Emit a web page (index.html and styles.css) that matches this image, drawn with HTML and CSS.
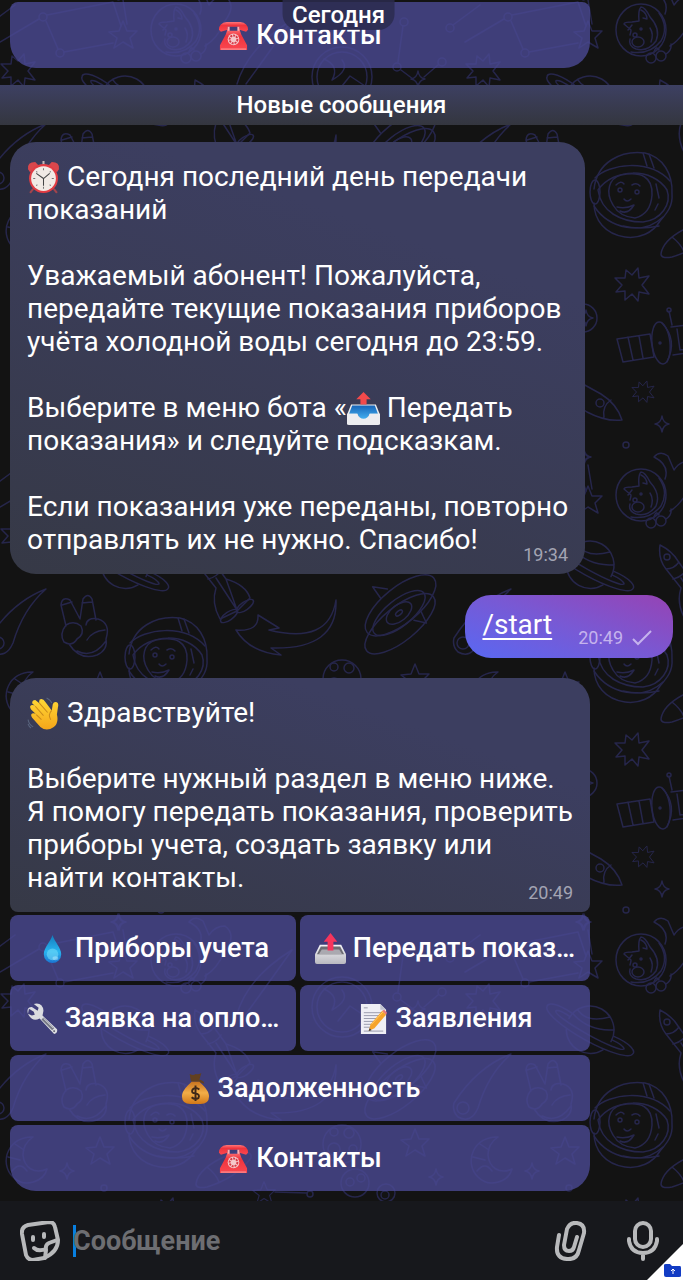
FILE: index.html
```
<!DOCTYPE html>
<html lang="ru">
<head>
    <meta charset="UTF-8">
    <meta name="viewport" content="width=device-width, initial-scale=1.0">
    <title>Чат с ботом</title>
    <link rel="stylesheet" href="styles.css">
</head>
<body>
    <!-- Обои чата: один узор, повторённый по сетке -->
    <svg class="wallpaper" aria-hidden="true">
        <defs>
            <g id="star5"><path d="M0-14L4-4 14-4 7 3 10 13 0 7-9 13-6 3-14-3-4-4z"/></g>
            <g id="star8"><path d="M0-10L6-17 7-7 17-9 10 0 17 9 7 7 6 16 0 9-7 15-7 6-16 7-10 0-17-7-7-7-6-15z"/></g>
            <g id="spark"><path d="M0-8Q1-1 7 0 1 1 0 8-1 1-7 0-1-1 0-8z"/></g>
            <g id="tile">
                <!-- космонавт -->
                <g transform="translate(629 196)">
                    <path d="M-35-7C-32-34-8-46 16-43 34-39 44-22 43-2 44 10 38 17 31 25 24 37 10 43-4 41-24 38-35 24-35 7"/>
                    <path d="M-34-18C-20-32 20-38 41-15M-31-6C-16-28 24-29 38-6 43 8 32 24 14 26-8 26-28 16-31-6z"/>
                    <path d="M-16 9C-24-4-20-18-8-21 12-25 24-19 23-1 22 14 14 20 6 22-6 21-12 16-16 9z"/>
                    <path d="M14-43L18-30M20-42L25-28M-35 10C-20 33 14 40 34 21M30 30Q10 34-6 30"/>
                    <ellipse cx="-34" cy="-4" rx="5" ry="12"/>
                    <path d="M-13-11Q-8-16-5-12M3-11Q8-14 11-10M-5 3Q-2 7 2 3M-12 11Q-3 13 5 9-1 19-9 15M27-12L30 2M29 8L26 14"/>
                    <circle cx="-9" cy="-6" r="2"/><circle cx="8" cy="-4" r="2"/>
                </g>
                <use href="#star8" x="632" y="285"/>
                <!-- спутник -->
                <path d="M617 339L650 334 654 357 623 362zM628 337L633 360M639 336L643 358M669 311L672 325M671 327L702 323 707 350 673 355M677 329L680 350 698 347 695 326M706 331L738 326 742 348 708 354M718 329L722 351"/>
                <ellipse cx="661" cy="343" rx="9" ry="21" transform="rotate(-6 661 343)"/>
                <path d="M662 323Q678 340 667 362"/><circle cx="669" cy="310" r="2"/><circle cx="660" cy="343" r="1"/>
                <use href="#star8" transform="translate(643 392) scale(.65)"/>
                <use href="#spark" x="662" y="424"/>
                <circle cx="626" cy="445" r="3"/>
                <!-- ракета слева -->
                <path d="M622 420Q617 404 601 394L572 378 560 394 587 412Q606 422 622 420zM611 400Q602 406 604 417"/>
                <circle cx="600" cy="403" r="4"/>
                <circle cx="583" cy="318" r="14"/><use href="#spark" x="586" y="318"/>
                <use href="#spark" x="584" y="457"/>
                <use href="#star5" x="588" y="500"/><path d="M588 465L592 489"/>
                <!-- собака -->
                <ellipse cx="641" cy="495" rx="25" ry="26"/>
                <path d="M659 478Q669 492 661 506 650 520 631 517"/>
                <path d="M630 500Q631 497 631 495L624 489Q624 487 632 487L639 486Q638 475 641 472 645 472 650 482 661 494 656 506 648 517 636 514 628 511 630 504M628 495L632 490M641 475Q647 478 647 484L643 483M650 493Q654 499 651 507"/>
                <ellipse cx="638" cy="507" rx="6" ry="5"/><circle cx="635" cy="500" r="2"/><circle cx="641" cy="494" r="1"/>
                <circle cx="651" cy="523" r="5"/><circle cx="661" cy="521" r="5"/>
                <path d="M654 517Q656 510 659 515M665 479Q670 465 654 457 660 450 668 456L674 470Q680 461 690 461 702 470 690 486 682 504 670 511M671 509Q672 515 666 519"/>
                <!-- планета с кольцом -->
                <g transform="translate(590 565) rotate(29)">
                    <path d="M-24 0A24 24 0 0 1 24 0M-21 11A24 24 0 0 0 21 11M-21-12Q-6-4 11-21M-23-6Q0 2 21-12"/>
                    <path d="M-24-6C-44-8-50-3-49 0A49 11 0 0 0 49 0C50-3 44-8 24-6M-24-2C-36-3-40-1-39 0A39 5 0 0 0 39 0Q36-3 24-2"/>
                </g>
                <!-- большая ракета -->
                <path d="M660 545Q658 559 666 569L681 588Q676 603 685 619L702 611M660 545Q672 551 678 561L691 579Q711 585 715 598L702 611M666 569Q674 569 679 562M673 579Q682 577 686 570M681 578L702 610M691 579L702 610"/>
                <ellipse cx="694" cy="616" rx="10" ry="4" transform="rotate(-35 694 616)"/><ellipse cx="710" cy="606" rx="10" ry="4" transform="rotate(-35 710 606)"/>
                <circle cx="667" cy="557" r="3"/>
                <!-- хвост пламени -->
                <path d="M701 630Q724 632 723 615L744 628 734 630Q794 645 801 600 803 650 736 648L746 655Q714 652 701 630z"/>
                <!-- галактика -->
                <g transform="translate(399 613) rotate(-39)">
                    <ellipse cx="6" cy="-5" rx="43" ry="18"/><ellipse cx="-6" cy="9" rx="43" ry="17"/>
                    <ellipse rx="32" ry="13"/><ellipse rx="15" ry="8"/><ellipse rx="4" ry="2"/>
                    <path d="M-5-23L-4-37 6-26M7 15L15 25 18 13"/>
                </g>
                <!-- комета -->
                <path d="M454 638Q477 602 511 589 488 609 478 643 471 659 458 652 452 646 454 638z"/><circle cx="463" cy="643" r="6"/>
                <!-- рука -->
                <path d="M66 626L61 605Q62 596 70 600L80 619 83 599Q88 592 92 599L96 620M62 605L72 602M82 603L92 602M66 625Q74 620 81 626 85 634 77 639 72 647 64 642 59 634 66 625M86 625Q87 617 98 619 111 623 106 639 108 650 97 655 80 661 69 644M87 640Q92 631 105 630M77 651Q93 659 106 641"/>
                <use href="#star8" x="483" y="71"/>
                <!-- луна и звёзды -->
                <path d="M33 672C9 671-2 697 13 712 25 724 44 716 47 704 34 710 24 702 23 690 23 682 27 676 33 672zM15 679L24 685M8 692L20 695M12 706Q20 696 27 706"/>
                <use href="#star5" x="100" y="686"/><use href="#star5" x="415" y="678"/><use href="#spark" x="436" y="712"/><use href="#spark" x="67" y="706"/>
                <circle cx="342" cy="679" r="19"/><circle cx="349" cy="668" r="5"/><circle cx="334" cy="667" r="4"/><circle cx="334" cy="684" r="6"/><circle cx="353" cy="684" r="4"/>
                <circle cx="355" cy="718" r="14"/><circle cx="350" cy="717" r="4"/><circle cx="361" cy="713" r="4"/>
                <circle cx="386" cy="728" r="9"/><circle cx="385" cy="730" r="4"/><circle cx="310" cy="729" r="3"/><circle cx="104" cy="723" r="3"/>
                <path d="M661 254Q663 238 693 225 718 218 716 228 701 248 672 257 661 259 661 254zM672 237Q681 244 684 252"/>
                <use href="#star5" transform="translate(264 728) scale(.8)"/><path d="M275 727L307 728"/>
                <!-- созвездия -->
                <circle cx="43" cy="17" r="4"/><circle cx="60" cy="53" r="4"/><circle cx="404" cy="22" r="4"/><circle cx="397" cy="67" r="4"/><circle cx="442" cy="62" r="4"/><circle cx="450" cy="28" r="4"/>
                <path d="M46 21L58 49M64 52L113 43M47 15L113 2 121 26M403 26L398 62M453 25L480 5M401 70L413 79M438 65L424 77M0 42L39 19"/>
                <use href="#spark" x="418" y="79"/><use href="#spark" x="118" y="-8"/>
                <circle cx="342" cy="77" r="30"/><circle cx="342" cy="77" r="25"/><path d="M324 59Q340 66 332 80 350 70 342 60M338 91L350 76 365 86"/>
                <path d="M237 84Q248 47 292 20M246 84Q265 58 292 20"/>
            </g>
        </defs>
        <g class="pattern">
            <use href="#tile" x="-465" y="-465"/><use href="#tile" y="-465"/><use href="#tile" x="465" y="-465"/>
            <use href="#tile" x="-465"/><use href="#tile"/><use href="#tile" x="465"/>
            <use href="#tile" x="-465" y="465"/><use href="#tile" y="465"/><use href="#tile" x="465" y="465"/>
            <use href="#tile" x="-465" y="930"/><use href="#tile" y="930"/><use href="#tile" x="465" y="930"/>
        </g>
    </svg>

    <!-- Эмодзи -->
    <svg class="sprites" aria-hidden="true">
        <defs>
            <linearGradient id="redGrad" x2="0" y2="1"><stop stop-color="#ff777a"/><stop offset=".35" stop-color="#f0343d"/><stop offset="1" stop-color="#fa4750"/></linearGradient>
            <linearGradient id="blueGrad" x2="0" y2="1"><stop stop-color="#1664b8"/><stop offset="1" stop-color="#48b4f3"/></linearGradient>
            <linearGradient id="greyGrad" x2="0" y2="1"><stop stop-color="#f5f5f7"/><stop offset="1" stop-color="#b9b9c0"/></linearGradient>
            <linearGradient id="dropGrad" x2="0" y2="1"><stop stop-color="#137bbc"/><stop offset=".6" stop-color="#29b5f0"/><stop offset="1" stop-color="#1b74d1"/></linearGradient>
            <linearGradient id="goldGrad" x2="0" y2="1"><stop stop-color="#c87420"/><stop offset=".5" stop-color="#f3ad48"/><stop offset="1" stop-color="#d27817"/></linearGradient>
            <linearGradient id="handGrad" x2="0" y2="1"><stop stop-color="#ffd735"/><stop offset="1" stop-color="#f5a61a"/></linearGradient>
        </defs>
        <symbol id="e-clock" viewBox="0 0 32 32">
            <path d="M6 27L3 31M26 27L29 31" stroke="#a3444c" stroke-width="2"/>
            <path d="M1 8Q0 1 8 1L11 4 3 11zM31 8Q32 1 24 1L21 4 29 11z" fill="#d9474c"/>
            <path d="M15 0H17V4H15z" fill="#c5b7b6"/>
            <circle cx="16" cy="17" r="14" fill="#e23c43"/><circle cx="16" cy="17" r="12" fill="#f1eae5"/>
            <path d="M16 7V9M16 25V27M6 17H8M24 17H26M9 10L10 11M23 10L22 11M9 24L10 23M23 24L22 23" stroke="#777" stroke-width="1"/>
            <path d="M9 12L16 17 22 12M16 17V24" fill="none" stroke="#444" stroke-width="1"/>
        </symbol>
        <symbol id="e-outbox" viewBox="0 0 32 32">
            <path d="M4 12H28L32 22H0z" fill="#eee"/><path d="M5 13H27L30 21H22Q20 27 16 27 12 27 10 21H2z" fill="url(#blueGrad)"/>
            <path d="M0 21H10Q12 26 16 26 20 26 22 21H32V31Q32 32 30 32H2Q0 32 0 31z" fill="#ededf0"/>
            <path d="M16 0L23 7H19V12H13V7H9z" fill="#f34a4b"/>
        </symbol>
        <symbol id="e-tray" viewBox="0 0 32 32">
            <path d="M5 12H27L32 22V30Q32 32 30 32H2Q0 32 0 30V22z" fill="url(#greyGrad)"/>
            <path d="M6 14H26L30 22H2z" fill="#6d6d73"/><path d="M7 17H25L28 22H4z" fill="#aaa9b0"/>
            <path d="M16 0L23 9H19V18H13V9H9z" fill="#f6355c"/>
        </symbol>
        <symbol id="e-wave" viewBox="0 0 32 32">
            <path d="M13 29L5 20Q3 17 5 16 7 15 9 17L4 12Q2 9 4 8 6 7 8 9L5 6Q5 3 8 3L12 6Q11 2 14 2 16 2 18 5L24 13 25 7Q26 4 29 5 31 6 30 10L29 17Q31 25 26 29 19 34 13 29z" fill="url(#handGrad)"/>
            <path d="M9 17L14 22M8 9L16 18M12 6L20 15M24 13Q20 17 23 22" fill="none" stroke="#c98a1c" stroke-width="1"/>
            <path d="M19 1Q23 3 24 6M1 22Q2 27 6 29M1 26Q2 29 4 30" fill="none" stroke="#59657f" stroke-width="1"/>
        </symbol>
        <symbol id="e-drop" viewBox="0 0 32 32">
            <path d="M16 2C14 9 7 15 7 22A9 9 0 0 0 25 22C25 15 18 9 16 2z" fill="url(#dropGrad)"/>
            <ellipse cx="16" cy="22" rx="6" ry="6" fill="#72dbf8" opacity=".6"/><ellipse cx="19" cy="26" rx="3" ry="2" fill="#b4eaff" opacity=".5"/>
        </symbol>
        <symbol id="e-wrench" viewBox="0 0 32 32">
            <path d="M1 11Q-1 4 5 4L11 8 12 5 7 1Q16-1 17 8L16 13 31 27Q32 31 28 32L13 16Q5 20 1 11L5 13 8 12 7 9 2 6z" fill="#dbdce0"/>
            <path d="M16 16L27 27" stroke="#777985" stroke-width="3"/><path d="M17 16L27 26" stroke="#bcbdc5" stroke-width="1"/><circle cx="28" cy="29" r="1" fill="#535364"/>
        </symbol>
        <symbol id="e-memo" viewBox="0 0 32 32">
            <path d="M3 1H23L29 7V32H3z" fill="#efeff5"/><path d="M23 1V7H29z" fill="#bfc2cf"/>
            <path d="M6 5H10M6 10H25M6 13H24M6 16H21M6 19H18M6 22H15M6 25H13M6 29H26" stroke="#999bac" stroke-width="1"/>
            <path d="M11 29L13 22 25 8 29 12 17 26z" fill="#f6a42a"/><path d="M14 22L26 9" stroke="#ffca63" stroke-width="1"/><path d="M25 8L27 7 30 10 29 12z" fill="#e77778"/><path d="M11 29L12 26 14 28z" fill="#3d3d44"/>
        </symbol>
        <symbol id="e-money" viewBox="0 0 32 32">
            <path d="M10 1Q14 3 16 1 19 2 22 0L20 7Q25 8 25 11L19 9H12L11 7z" fill="#62401f"/>
            <path d="M12 9H20C24 13 30 18 30 24Q30 32 21 32H11Q2 32 2 24C2 18 8 13 12 9z" fill="url(#goldGrad)"/>
            <path d="M20 17Q16 14 13 17 11 21 16 21 21 22 19 26 15 28 12 25M16 13V29" fill="none" stroke="#3f2818" stroke-width="2"/>
        </symbol>
        <symbol id="e-phone" viewBox="0 0 32 32">
            <path d="M1 10Q1 3 9 2H23Q31 3 31 10L29 12 22 10V7H10V10L3 12z" fill="url(#redGrad)"/>
            <path d="M10 9L12 11H20L22 9 24 15 30 26V31H2V26L8 15z" fill="url(#redGrad)"/>
            <path d="M11 7V11M21 7V11" stroke="#ffafb0" stroke-width="2"/>
            <circle cx="16" cy="20" r="6" fill="#f5c7ca"/><circle cx="16" cy="20" r="4" fill="none" stroke="#d73c48" stroke-width="2" stroke-dasharray="2 1"/>
            <path d="M3 30H29" stroke="#ffa4a3" stroke-width="1"/>
        </symbol>
    </svg>

    <div class="date-pill">Сегодня</div>

    <main class="chat">
        <div class="keyboard">
            <button type="button" class="wide last"><svg class="emoji"><use href="#e-phone"/></svg>Контакты</button>
        </div>

        <div class="unread">Новые сообщения</div>

        <article class="message notice">
            <p><svg class="emoji"><use href="#e-clock"/></svg>Сегодня последний день передачи показаний</p>
            <p>Уважаемый абонент! Пожалуйста, передайте текущие показания приборов учёта холодной воды сегодня до 23:59.</p>
            <p>Выберите в меню бота «<svg class="emoji"><use href="#e-outbox"/></svg>Передать показания» и следуйте подсказкам.</p>
            <p>Если показания уже переданы, повторно отправлять их не нужно. Спасибо!</p>
            <time>19:34</time>
        </article>

        <article class="message outgoing">
            <a href="#start">/start</a>
            <span class="status">
                <time>20:49</time>
                <svg class="check" viewBox="0 0 20 16"><path d="M1 9L6 14 19 1"/></svg>
            </span>
        </article>

        <article class="message greeting">
            <p><svg class="emoji"><use href="#e-wave"/></svg>Здравствуйте!</p>
            <p>Выберите нужный раздел в меню ниже. Я помогу передать показания, проверить приборы учета, создать заявку или найти контакты.</p>
            <time>20:49</time>
        </article>

        <div class="keyboard">
            <button type="button"><svg class="emoji"><use href="#e-drop"/></svg>Приборы учета</button>
            <button type="button"><svg class="emoji"><use href="#e-tray"/></svg>Передать показ…</button>
            <button type="button"><svg class="emoji"><use href="#e-wrench"/></svg>Заявка на опло…</button>
            <button type="button"><svg class="emoji"><use href="#e-memo"/></svg>Заявления</button>
            <button type="button" class="wide"><svg class="emoji"><use href="#e-money"/></svg>Задолженность</button>
            <button type="button" class="wide last"><svg class="emoji"><use href="#e-phone"/></svg>Контакты</button>
        </div>
    </main>

    <footer class="composer">
        <button type="button" aria-label="Стикеры">
            <svg viewBox="0 0 40 40">
                <path d="M8 4L29 1Q34 1 35 6L38 19Q38 31 24 37L13 39Q8 39 6 34L2 13Q1 6 8 4z"/>
                <path d="M37 19L29 22Q25 24 26 29L25 37M14 27Q18 31 26 28M13 16V19M24 13V16"/>
            </svg>
        </button>
        <label class="field">
            <input type="text" placeholder="Сообщение" aria-label="Сообщение">
        </label>
        <button type="button" class="attach" aria-label="Прикрепить файл">
            <svg viewBox="0 0 40 40">
                <path d="M6 14L4 26Q3 37 14 38 24 39 26 29L31 12Q32 3 24 2 17 1 14 8L11 24Q11 30 16 30 20 30 21 26L24 16"/>
            </svg>
        </button>
        <button type="button" aria-label="Голосовое сообщение">
            <svg viewBox="0 0 40 40">
                <rect x="12" y="2" width="16" height="24" rx="8"/><path d="M6 18V20Q8 32 20 32 32 32 34 20V18M20 32V38"/>
            </svg>
        </button>
    </footer>

    <svg class="corner" viewBox="0 0 37 37" aria-hidden="true">
        <path d="M37 0V37H0z" fill="#fff"/>
        <path d="M18 21Q18 20 20 20H24L26 22H34Q35 22 35 24V32Q35 33 33 33H20Q18 33 18 31z" fill="#123cc4"/>
        <path d="M27 30V25M25 27L27 25 29 27" fill="none" stroke="#fff" stroke-width="1"/>
    </svg>
</body>
</html>
```
FILE: styles.css
```
* {
    box-sizing: border-box;
}
body {
    background-color: #131313;
    color: white;
    font-family: Roboto, 'Noto Sans', sans-serif;
    font-size: 28px;
    line-height: 33px;
    margin: 0;
    min-height: 100vh;
    position: relative;
    display: flex;
    flex-direction: column;
    overflow-x: hidden;
}
button {
    border: none;
    color: white;
    font-family: inherit;
    cursor: pointer;
}
.wallpaper {
    position: absolute;
    top: 0;
    left: 0;
    width: 100%;
    height: 100%;
}
.pattern {
    fill: none;
    stroke: #26264b;
    stroke-width: 1.5;
    stroke-linejoin: round;
    stroke-linecap: round;
}
.sprites {
    position: absolute;
    width: 0;
    height: 0;
}
.date-pill {
    position: absolute;
    top: 0;
    left: 50%;
    transform: translateX(-50%);
    margin-left: -3px;
    z-index: 2;
    padding: 0 10px;
    border-radius: 0 0 16px 16px;
    background-color: rgba(43, 43, 79, 0.85);
    font-size: 24px;
    font-weight: 500;
    line-height: 30px;
}
.chat {
    position: relative;
    flex: 1;
    display: flex;
    flex-direction: column;
    align-items: flex-start;
    padding: 2px 10px 10px;
}
.keyboard {
    display: grid;
    grid-template-columns: 286fr 290fr;
    gap: 4px;
    width: 100%;
    max-width: 580px;
}
.keyboard button {
    display: flex;
    justify-content: center;
    align-items: center;
    gap: 7px;
    height: 66px;
    padding: 0;
    border-radius: 8px;
    background-color: rgba(75, 74, 148, 0.8);
    font-size: 27px;
    font-weight: 500;
    white-space: nowrap;
}
.keyboard .wide {
    grid-column: 1 / 3;
}
.keyboard .last {
    border-radius: 8px 8px 26px 26px;
}
.emoji {
    width: 31px;
    height: 31px;
}
.unread {
    align-self: stretch;
    margin: 17px -10px;
    height: 40px;
    line-height: 40px;
    background: linear-gradient(#3d4062, #34363f);
    text-align: center;
    font-size: 24px;
    font-weight: 500;
}
.message {
    position: relative;
    padding: 18px 12px 18px 17px;
    border-radius: 26px;
    background: linear-gradient(20deg, #363946, #3c3e60 75%);
}
.message p {
    margin: 0 0 33px;
}
.message .emoji {
    width: 33px;
    height: 33px;
    margin: -3px 7px -3px 0;
    vertical-align: -5px;
}
.message time {
    position: absolute;
    right: 17px;
    bottom: 8px;
    color: #a3a4b3;
    font-size: 18px;
    line-height: 22px;
}
.notice {
    width: 100%;
    max-width: 575px;
}
.notice p:nth-of-type(4) {
    margin: 0;
}
.outgoing {
    align-self: flex-end;
    display: flex;
    gap: 26px;
    margin: 21px 0 20px;
    padding: 13px 21px 17px 17px;
    background: linear-gradient(20deg, #5968f2, #7859d4 50%, #9643b4);
}
.outgoing a {
    color: white;
    text-decoration-thickness: 2px;
    text-underline-offset: 4px;
}
.status {
    display: flex;
    align-items: center;
    gap: 9px;
    padding-top: 27px;
    height: 33px;
}
.status time {
    position: static;
    color: #c5b3ed;
}
.check {
    width: 20px;
    height: 16px;
    fill: none;
    stroke: #c5b3ed;
    stroke-width: 2;
}
.greeting {
    width: 100%;
    max-width: 580px;
    margin-bottom: 3px;
    padding-right: 16px;
    border-radius: 26px 26px 8px 8px;
}
.greeting p:nth-of-type(2) {
    margin: 0;
}
.composer {
    position: relative;
    display: flex;
    align-items: center;
    height: 80px;
    padding: 0 19px;
    background-color: #17181c;
}
.composer button {
    width: 42px;
    height: 42px;
    padding: 1px;
    background: none;
}
.composer svg {
    display: block;
    width: 40px;
    height: 40px;
    fill: none;
    stroke: #b8b9bb;
    stroke-width: 4;
    stroke-linecap: round;
    stroke-linejoin: round;
}
.field {
    flex: 1;
    display: flex;
    margin-left: 12px;
    background: linear-gradient(#087fe0, #087fe0) left / 3px 100% no-repeat;
}
.field input {
    width: 100%;
    height: 32px;
    padding: 0;
    border: none;
    outline: none;
    background: none;
    color: white;
    font-family: inherit;
    font-size: 27px;
    font-weight: bold;
}
.field input::placeholder {
    color: #6d6e72;
    opacity: 1;
}
.composer .attach {
    margin-right: 28px;
}
.corner {
    position: absolute;
    right: 0;
    bottom: 0;
    width: 37px;
    height: 37px;
}
```
